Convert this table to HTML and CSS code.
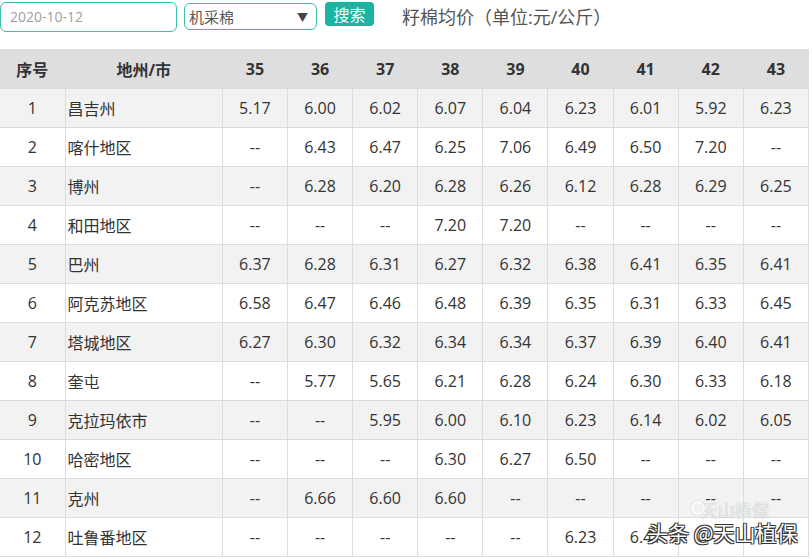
FILE: index.html
```html
<!DOCTYPE html>
<html lang="zh">
<head>
<meta charset="utf-8">
<link rel="stylesheet" href="styles.css">
</head>
<body>
<div class="page">
  <div class="toolbar">
    <div class="date-input">2020-10-12</div>
    <div class="select"><span>机采棉</span><span class="arrow">▼</span></div>
    <button class="btn">搜索</button>
    <div class="title">籽棉均价（单位:元/公斤）</div>
  </div>
  <table class="grid">
    <colgroup>
      <col class="c-no"><col class="c-name">
      <col class="c-v"><col class="c-v"><col class="c-v"><col class="c-v"><col class="c-v"><col class="c-v"><col class="c-v"><col class="c-v"><col class="c-v">
    </colgroup>
    <thead>
      <tr><th>序号</th><th>地州/市</th><th>35</th><th>36</th><th>37</th><th>38</th><th>39</th><th>40</th><th>41</th><th>42</th><th>43</th></tr>
    </thead>
    <tbody>
      <tr><td>1</td><td class="name">昌吉州</td><td>5.17</td><td>6.00</td><td>6.02</td><td>6.07</td><td>6.04</td><td>6.23</td><td>6.01</td><td>5.92</td><td>6.23</td></tr>
      <tr><td>2</td><td class="name">喀什地区</td><td>--</td><td>6.43</td><td>6.47</td><td>6.25</td><td>7.06</td><td>6.49</td><td>6.50</td><td>7.20</td><td>--</td></tr>
      <tr><td>3</td><td class="name">博州</td><td>--</td><td>6.28</td><td>6.20</td><td>6.28</td><td>6.26</td><td>6.12</td><td>6.28</td><td>6.29</td><td>6.25</td></tr>
      <tr><td>4</td><td class="name">和田地区</td><td>--</td><td>--</td><td>--</td><td>7.20</td><td>7.20</td><td>--</td><td>--</td><td>--</td><td>--</td></tr>
      <tr><td>5</td><td class="name">巴州</td><td>6.37</td><td>6.28</td><td>6.31</td><td>6.27</td><td>6.32</td><td>6.38</td><td>6.41</td><td>6.35</td><td>6.41</td></tr>
      <tr><td>6</td><td class="name">阿克苏地区</td><td>6.58</td><td>6.47</td><td>6.46</td><td>6.48</td><td>6.39</td><td>6.35</td><td>6.31</td><td>6.33</td><td>6.45</td></tr>
      <tr><td>7</td><td class="name">塔城地区</td><td>6.27</td><td>6.30</td><td>6.32</td><td>6.34</td><td>6.34</td><td>6.37</td><td>6.39</td><td>6.40</td><td>6.41</td></tr>
      <tr><td>8</td><td class="name">奎屯</td><td>--</td><td>5.77</td><td>5.65</td><td>6.21</td><td>6.28</td><td>6.24</td><td>6.30</td><td>6.33</td><td>6.18</td></tr>
      <tr><td>9</td><td class="name">克拉玛依市</td><td>--</td><td>--</td><td>5.95</td><td>6.00</td><td>6.10</td><td>6.23</td><td>6.14</td><td>6.02</td><td>6.05</td></tr>
      <tr><td>10</td><td class="name">哈密地区</td><td>--</td><td>--</td><td>--</td><td>6.30</td><td>6.27</td><td>6.50</td><td>--</td><td>--</td><td>--</td></tr>
      <tr><td>11</td><td class="name">克州</td><td>--</td><td>6.66</td><td>6.60</td><td>6.60</td><td>--</td><td>--</td><td>--</td><td>--</td><td>--</td></tr>
      <tr><td>12</td><td class="name">吐鲁番地区</td><td>--</td><td>--</td><td>--</td><td>--</td><td>--</td><td>6.23</td><td>6.41</td><td>--</td><td>--</td></tr>
    </tbody>
  </table>
  <div class="watermark">
    <span class="ghost">天山植保</span>
    <span class="mark">头条 <span class="logo"></span>@天山植保</span>
  </div>
</div>
</body>
</html>
```

FILE: styles.css
```css
* { box-sizing: border-box; }
html, body { margin: 0; padding: 0; background: #fff; }
body {
  font-family: "Open Sans", "Noto Sans CJK SC", sans-serif;
  color: #333;
  width: 812px;
  height: 559px;
  overflow: hidden;
}
.page { position: relative; width: 812px; height: 559px; }
.toolbar {
  display: flex;
  align-items: flex-start;
  height: 49px;
  padding-top: 2px;
}
.date-input {
  width: 177px;
  height: 30px;
  border: 1px solid #3dbdae;
  border-radius: 6px;
  color: #a0a0a0;
  font-size: 14px;
  line-height: 28px;
  padding-left: 9px;
}
.select {
  margin-left: 7px;
  margin-top: 1px;
  width: 133px;
  height: 27px;
  border: 1px solid #3dbdae;
  border-radius: 6px;
  display: flex;
  align-items: center;
  justify-content: space-between;
  padding: 0 8px 0 4px;
  font-size: 15px;
  color: #555;
}
.select .arrow { font-size: 11px; color: #444; }
.btn {
  margin-left: 8px;
  width: 49px;
  height: 24px;
  border: none;
  border-radius: 4px;
  background: #1bb3a1;
  color: #fff;
  font-family: "Noto Sans CJK SC", sans-serif;
  font-size: 16px;
  line-height: 24px;
  padding: 0;
}
.title {
  margin-left: 28px;
  font-size: 18px;
  color: #555;
  line-height: 30px;
}
.grid {
  border-collapse: collapse;
  table-layout: fixed;
  width: 809px;
  font-size: 16px;
}
.c-no { width: 65px; }
.c-name { width: 157px; }
.c-v { width: 65px; }
.grid th, .grid td {
  border: 1px solid #dcdcdc;
  text-align: center;
  padding: 0;
  white-space: nowrap;
}
.grid th {
  background: #dedede;
  height: 39px;
  font-weight: bold;
  border-color: #dedede;
}
.grid td { height: 39px; }
.grid td.name { text-align: left; padding-left: 2px; }
.grid tbody tr:nth-child(odd) td { background: #f2f2f2; }
.grid tbody tr:nth-child(even) td { background: #fff; }
.grid tr > :first-child { border-left: none; }

.watermark {
  position: absolute;
  left: 647px;
  top: 497px;
  width: 162px;
  height: 58px;
  font-family: "Noto Sans CJK SC", sans-serif;
  pointer-events: none;
}
.ghost {
  position: absolute;
  left: 54px;
  top: 0;
  font-size: 17px;
  color: rgba(255,255,255,0.8);
  text-shadow: 0 0 1px rgba(0,0,0,0.35);
}
.mark {
  position: absolute;
  left: 0;
  top: 20px;
  font-size: 21px;
  color: #fff;
  white-space: nowrap;
  text-shadow: -1px -1px 0 #333, 1px -1px 0 #333, -1px 1px 0 #333, 1px 1px 0 #333;
}
.logo {
  position: absolute;
  left: 44px;
  top: -16px;
  width: 14px;
  height: 14px;
  border-radius: 50%;
  border: 2px solid rgba(255,255,255,0.85);
  box-shadow: 0 0 1px rgba(0,0,0,0.4);
}
```
